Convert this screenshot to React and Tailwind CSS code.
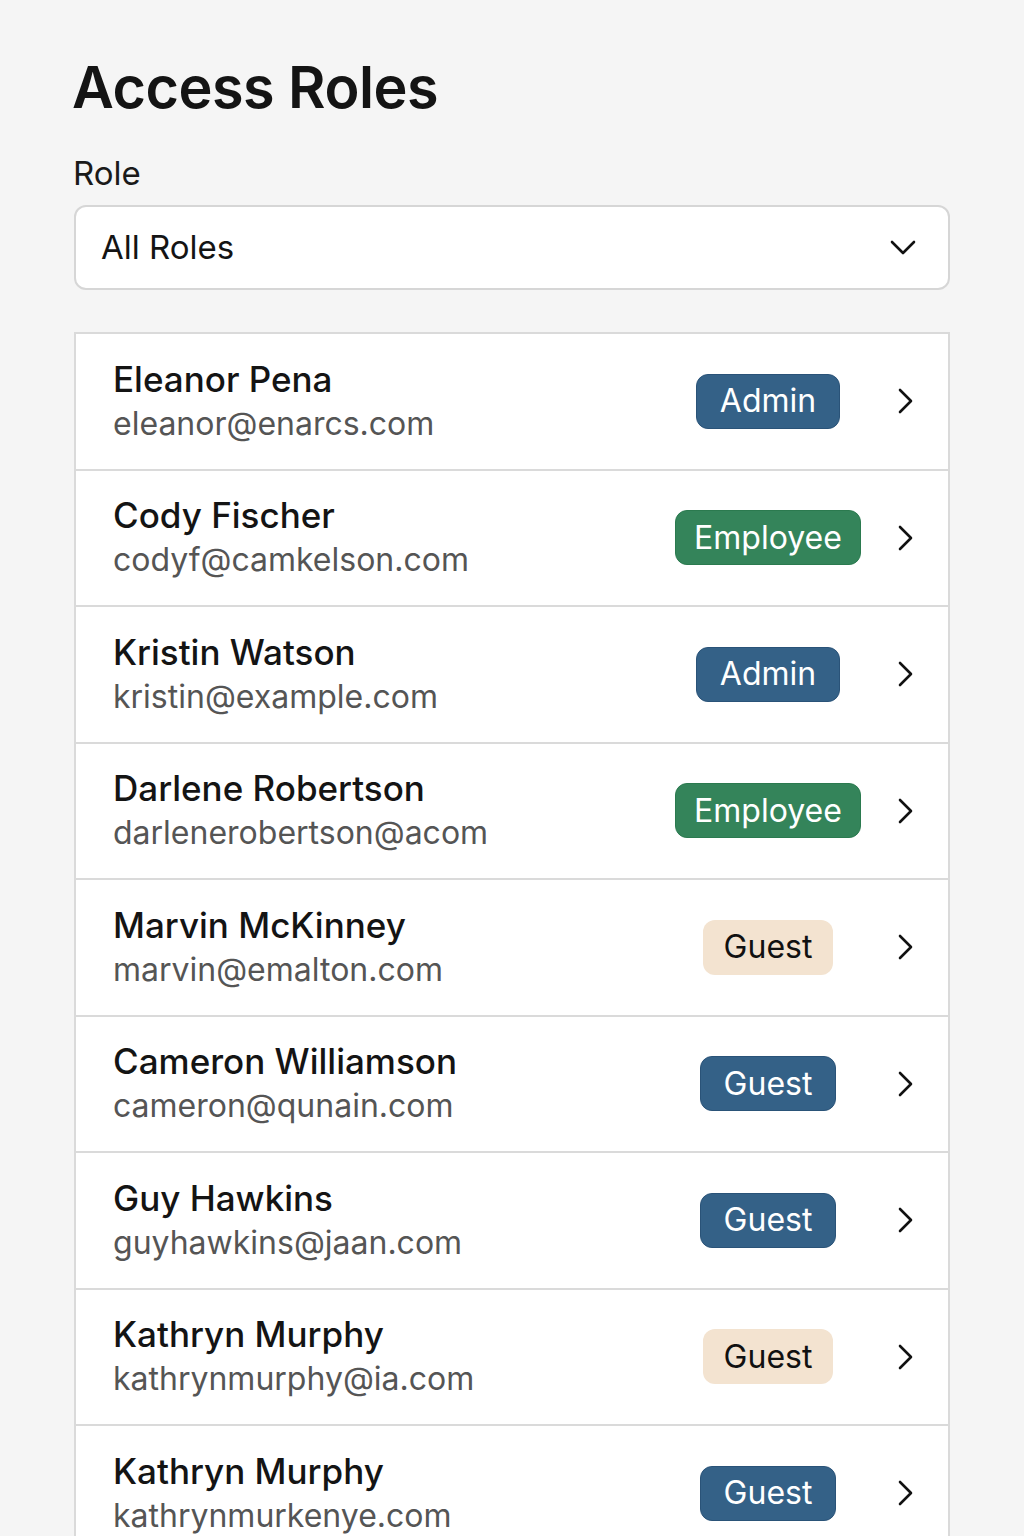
const users = [
  { name: "Eleanor Pena", email: "eleanor@enarcs.com", role: "Admin", tone: "blue" },
  { name: "Cody Fischer", email: "codyf@camkelson.com", role: "Employee", tone: "green" },
  { name: "Kristin Watson", email: "kristin@example.com", role: "Admin", tone: "blue" },
  { name: "Darlene Robertson", email: "darlenerobertson@acom", role: "Employee", tone: "green" },
  { name: "Marvin McKinney", email: "marvin@emalton.com", role: "Guest", tone: "beige" },
  { name: "Cameron Williamson", email: "cameron@qunain.com", role: "Guest", tone: "blue" },
  { name: "Guy Hawkins", email: "guyhawkins@jaan.com", role: "Guest", tone: "blue" },
  { name: "Kathryn Murphy", email: "kathrynmurphy@ia.com", role: "Guest", tone: "beige" },
  { name: "Kathryn Murphy", email: "kathrynmurkenye.com", role: "Guest", tone: "blue" },
];

const tones = {
  blue: "bg-[#346187] text-white border border-[#2a5378] px-[23px]",
  green: "bg-[#34845a] text-white border border-[#2b7a4f] px-[18px]",
  beige: "bg-[#f3e3d0] text-[#111] px-[21px]",
};

function Badge({ role, tone }) {
  return (
    <span className={`inline-flex items-center h-[55px] rounded-[12px] text-[32px] leading-none ${tones[tone]}`}>
      {role}
    </span>
  );
}

export default function App() {
  return (
    <div className="min-h-screen bg-[#f5f5f5] font-['Inter',sans-serif] text-[#141414]">
      <div className="pl-[74px] pr-[74px] pt-[52px]">
        <h1 className="-ml-[2px] text-[57.5px] font-semibold leading-[70px] tracking-[-0.5px]">Access Roles</h1>

        <label className="block mt-[31px] -ml-[1px] text-[33px] leading-[40px] text-[#1a1a1a]">Role</label>
        <div className="mt-[12px] flex items-center justify-between h-[85px] bg-white border-2 border-[#d6d6d6] rounded-[12px] pl-[25px] pr-[32px]">
          <span className="text-[33px]">All Roles</span>
          <svg width="26" height="16" viewBox="0 0 26 16" fill="none" stroke="#111" strokeWidth="2.6" strokeLinecap="round" strokeLinejoin="round">
            <polyline points="2,2 13,13 24,2" />
          </svg>
        </div>

        <div className="mt-[42px] bg-white border-2 border-[#dadada] border-b-0">
          {users.map((u, i) => (
            <div
              key={i}
              className="flex items-center h-[136.5px] border-b-2 border-[#dadada] pl-[37px] pr-[34px]"
            >
              <div className="flex-1 min-w-0">
                <div className="text-[35px] leading-[45px] font-medium text-[#141414]">{u.name}</div>
                <div className="text-[32px] leading-[44px] text-[#555]">{u.email}</div>
              </div>
              <div className="w-[200px] flex justify-center">
                <Badge role={u.role} tone={u.tone} />
              </div>
              <svg className="ml-[30px]" width="16" height="26" viewBox="0 0 16 26" fill="none" stroke="#111" strokeWidth="2.6" strokeLinecap="round" strokeLinejoin="round">
                <polyline points="2,2 13,13 2,24" />
              </svg>
            </div>
          ))}
        </div>
      </div>
    </div>
  );
}
